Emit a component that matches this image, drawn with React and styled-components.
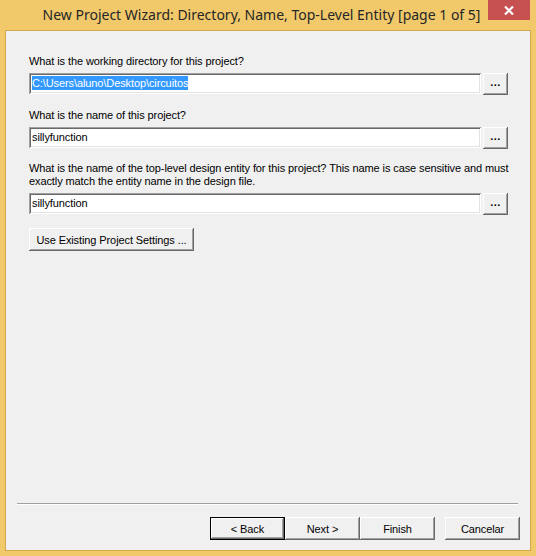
import React from 'react'
import styled, { createGlobalStyle, css } from 'styled-components'

const GlobalStyle = createGlobalStyle`
  html, body {
    margin: 0;
    padding: 0;
    background: #f1c96b;
  }
  body {
    font-family: 'Liberation Sans', Arial, sans-serif;
  }
`

const raised = css`
  background: #f0f0f0;
  border: none;
  box-shadow:
    inset -1px -1px #696969,
    inset 1px 1px #ffffff,
    inset -2px -2px #a0a0a0,
    inset 2px 2px #f0f0f0;
`

const Frame = styled.div`
  width: 536px;
  height: 556px;
  background: #f1c96b;
  display: flex;
  flex-direction: column;
  box-sizing: border-box;
`

const TitleBar = styled.div`
  height: 30px;
  display: grid;
  grid-template-columns: 1fr;
  grid-template-rows: 30px;
`

const Title = styled.div`
  grid-area: 1 / 1;
  justify-self: center;
  align-self: start;
  margin: 6px 13px 0 0;
  font-family: 'Noto Sans', 'Open Sans', sans-serif;
  font-size: 14px;
  line-height: 18px;
  color: #262626;
  white-space: nowrap;
`

const CloseButton = styled.div`
  grid-area: 1 / 1;
  justify-self: end;
  align-self: start;
  margin-right: 6px;
  width: 42px;
  height: 20px;
  background: #c75050;
  display: flex;
  align-items: center;
  justify-content: center;
`

const Panel = styled.div`
  flex: 1;
  margin: 0 5px 5px 5px;
  border: 1px solid #d3a84f;
  background: #f0f0f0;
  display: flex;
  flex-direction: column;
  font-size: 11px;
  color: #000;
`

const Body = styled.div`
  flex: 1;
  padding: 24px 21px 0 23px;
  display: flex;
  flex-direction: column;
`

const Field = styled.div`
  display: flex;
  flex-direction: column;
  gap: ${(p) => p.$gap || 5}px;
  margin-bottom: ${(p) => p.$after || 0}px;
`

const Label = styled.div`
  line-height: 13px;
  letter-spacing: -0.1px;
`

const Row = styled.div`
  display: flex;
  align-items: flex-start;
  gap: 2px;
`

const TextBox = styled.div`
  width: 452px;
  height: 21px;
  box-sizing: border-box;
  background: #fff;
  box-shadow:
    inset 1px 1px #a0a0a0,
    inset -1px -1px #ffffff,
    inset 2px 2px #696969,
    inset -2px -2px #e3e3e3;
  padding: 3px 0 0 3px;
  line-height: 14px;
  letter-spacing: -0.1px;
  white-space: nowrap;
`

const Selected = styled.span`
  background: #3399ff;
  color: #fff;
  display: inline-block;
  height: 14px;
`

const BrowseButton = styled.button`
  ${raised};
  width: 25px;
  height: 22px;
  padding: 0 0 4px;
  font-family: inherit;
  font-size: 11px;
  font-weight: bold;
  letter-spacing: 0.5px;
  color: #000;
`

const SettingsButton = styled.button`
  ${raised};
  align-self: flex-start;
  width: 165px;
  height: 23px;
  padding: 0;
  font-family: inherit;
  font-size: 11px;
  letter-spacing: -0.1px;
  color: #000;
`

const Separator = styled.div`
  margin: 0 12px 0 11px;
  border-top: 1px solid #a0a0a0;
  border-bottom: 1px solid #ffffff;
`

const Footer = styled.div`
  display: flex;
  justify-content: flex-end;
  padding: 12px 10px 10px 0;
`

const NavButton = styled.button`
  ${raised};
  width: 75px;
  height: 23px;
  padding: 0;
  margin-left: ${(p) => p.$gapBefore || 0}px;
  font-family: inherit;
  font-size: 11px;
  letter-spacing: -0.1px;
  color: #000;
  ${(p) =>
    p.$default &&
    css`
      box-shadow:
        inset 0 0 0 1px #000,
        inset -2px -2px #696969,
        inset 2px 2px #ffffff,
        inset -3px -3px #a0a0a0;
    `}
`

export default function App() {
  return (
    <>
      <GlobalStyle />
      <Frame>
        <TitleBar>
          <Title>New Project Wizard: Directory, Name, Top-Level Entity [page 1 of 5]</Title>
          <CloseButton>
            <svg width="10" height="9" viewBox="0 0 10 9">
              <path d="M1 0.5 L9 8.5 M9 0.5 L1 8.5" stroke="#fff" strokeWidth="2.2" />
            </svg>
          </CloseButton>
        </TitleBar>
        <Panel>
          <Body>
            <Field $after={14}>
              <Label>What is the working directory for this project?</Label>
              <Row>
                <TextBox>
                  <Selected>C:\Users\aluno\Desktop\circuitos</Selected>
                </TextBox>
                <BrowseButton>...</BrowseButton>
              </Row>
            </Field>
            <Field $after={13}>
              <Label>What is the name of this project?</Label>
              <Row>
                <TextBox>sillyfunction</TextBox>
                <BrowseButton>...</BrowseButton>
              </Row>
            </Field>
            <Field $after={13}>
              <Label>
                What is the name of the top-level design entity for this project? This name is case sensitive and must
                <br />
                exactly match the entity name in the design file.
              </Label>
              <Row>
                <TextBox>sillyfunction</TextBox>
                <BrowseButton>...</BrowseButton>
              </Row>
            </Field>
            <SettingsButton>Use Existing Project Settings ...</SettingsButton>
          </Body>
          <Separator />
          <Footer>
            <NavButton $default>&lt; Back</NavButton>
            <NavButton>Next &gt;</NavButton>
            <NavButton>Finish</NavButton>
            <NavButton $gapBefore={10}>Cancelar</NavButton>
          </Footer>
        </Panel>
      </Frame>
    </>
  )
}
